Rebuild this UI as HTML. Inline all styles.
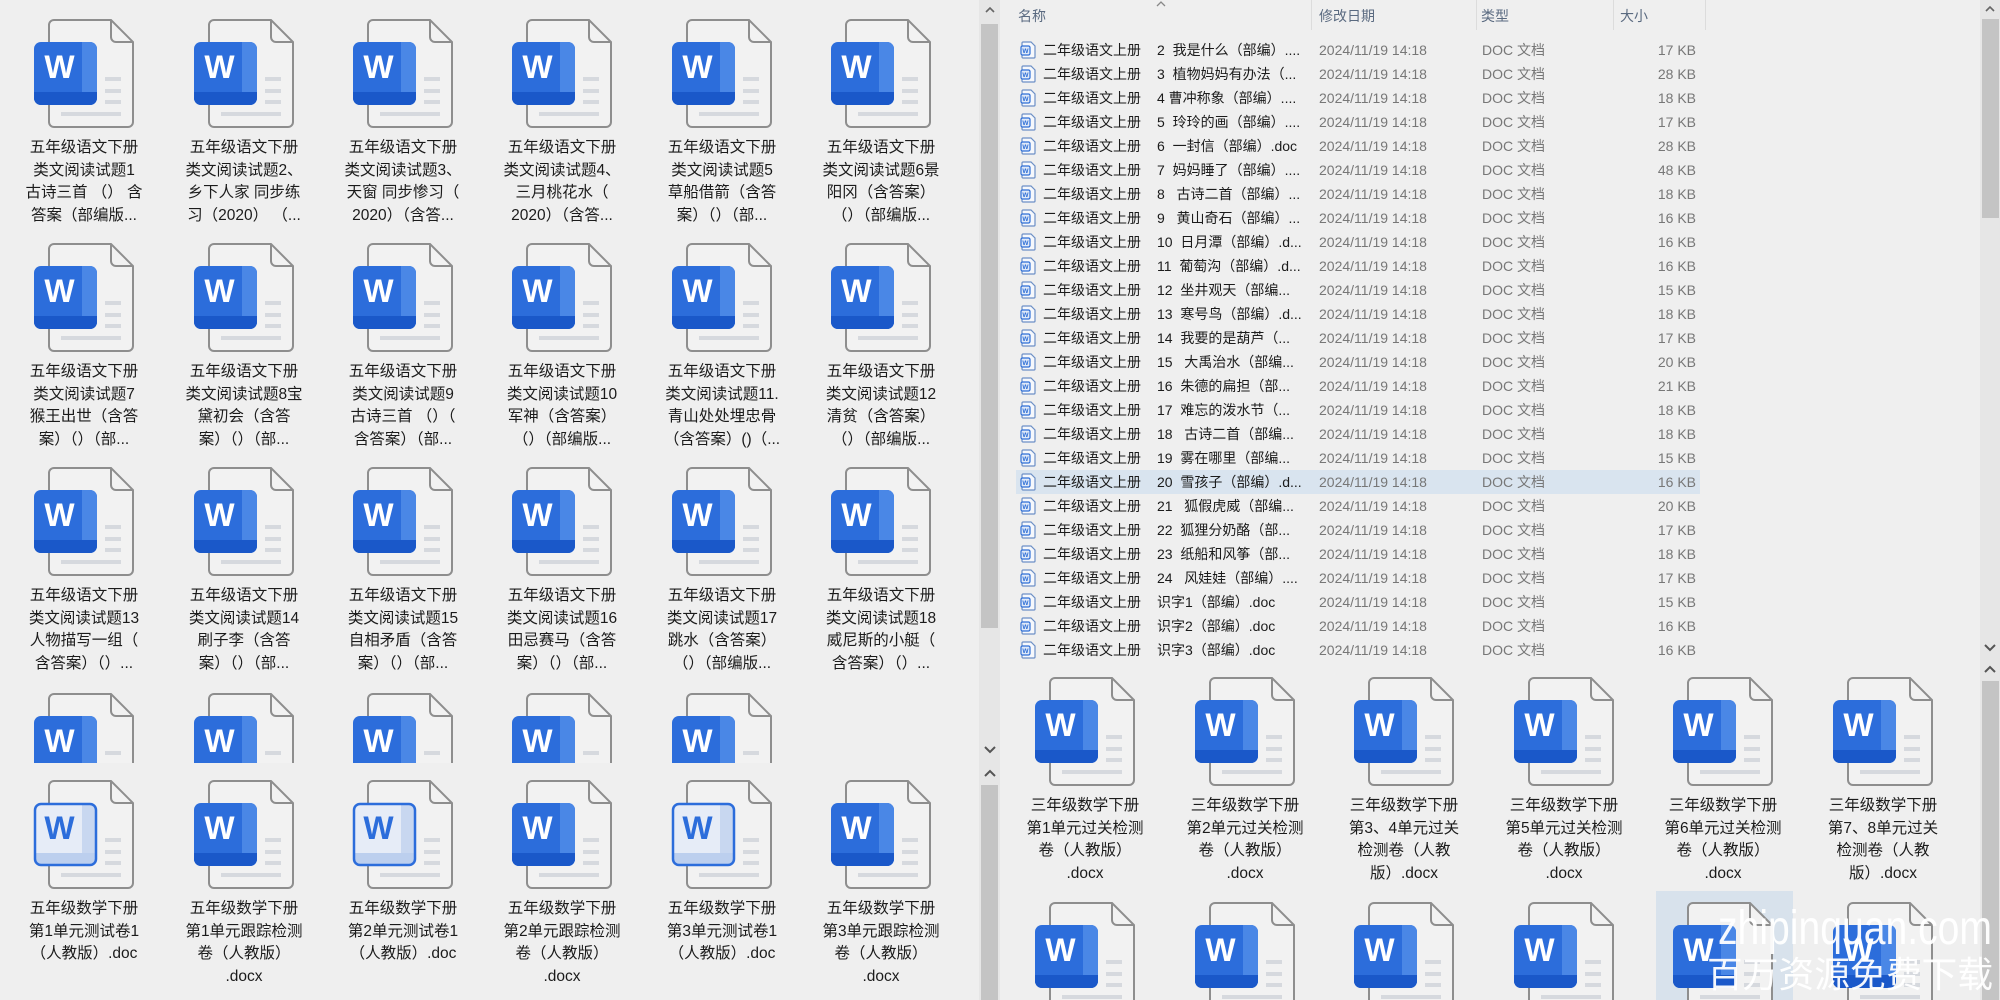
<!DOCTYPE html>
<html style="width:2000px;height:1000px;overflow:hidden"><head><meta charset="utf-8">
<style>
*{margin:0;padding:0;box-sizing:border-box}
html,body{width:2000px;height:1000px;overflow:hidden}
body{background:#efefef;position:relative;font-family:"Liberation Sans","Noto Sans CJK SC",sans-serif;color:#1b1b1b}
.it{position:absolute;width:140px;height:220px}
.it svg{position:absolute;left:19px;top:-1px}
.it .t{position:absolute;left:-10px;top:118px;width:160px;text-align:center;font-size:15.5px;line-height:22.7px;white-space:nowrap}
.clip{height:70px;overflow:hidden}
.hd{position:absolute;top:6px;font-size:14px;color:#5a6a80}
.sep{position:absolute;top:0;width:1px;height:30px;background:#dcdcdc}
.r{position:absolute;left:1016px;width:684px;height:24px;font-size:14px;line-height:24px;white-space:nowrap}
.r svg{position:absolute;left:4px;top:3px}
.r .a{position:absolute;left:27px;color:#1b1b1b}
.r .b{position:absolute;left:141px;color:#1b1b1b}
.r .c{position:absolute;left:303px;color:#777}
.r .d{position:absolute;left:466px;color:#777}
.r .e{position:absolute;right:4px;color:#777}
.hl{background:#d9e4ef}
</style></head><body>
<svg width="0" height="0" style="position:absolute">
<defs>
<clipPath id="cp"><rect x="-14" y="23" width="63" height="63" rx="7"/></clipPath>
<g id="doc">
<path d="M6 1H63L85 23V103a5 5 0 0 1-5 5H6a5 5 0 0 1-5-5V6a5 5 0 0 1 5-5Z" fill="#f2f2f2" stroke="#8e8e8e" stroke-width="2"/>
<path d="M63 1V18a5 5 0 0 0 5 5H85" fill="none" stroke="#8e8e8e" stroke-width="2"/>
<rect x="57" y="58" width="16" height="4" fill="#d6d9de"/><rect x="57" y="70" width="16" height="4" fill="#d6d9de"/><rect x="57" y="81" width="16" height="4" fill="#d6d9de"/><rect x="13" y="93" width="60" height="4" fill="#d6d9de"/>
</g>
<g id="w">
<use href="#doc"/>
<g clip-path="url(#cp)"><rect x="-14" y="23" width="63" height="63" fill="#2c6ddb"/><rect x="34" y="23" width="15" height="63" fill="#4a87e6"/><rect x="-14" y="73" width="63" height="13" fill="#1a58c9"/></g>
<text x="11.5" y="59" font-family="Liberation Sans" font-weight="bold" font-size="32" fill="#fff" text-anchor="middle">W</text>
</g>
<g id="o">
<use href="#doc"/>
<g clip-path="url(#cp)"><rect x="-14" y="23" width="63" height="63" fill="#e6ecf7"/><rect x="34" y="23" width="15" height="63" fill="#c8d7f0"/><rect x="-14" y="73" width="63" height="13" fill="#bccfee"/></g>
<rect x="-13" y="24" width="61" height="61" rx="6" fill="none" stroke="#2c6ddb" stroke-width="2.5"/>
<text x="11.5" y="59" font-family="Liberation Sans" font-weight="bold" font-size="32" fill="#2c6ddb" text-anchor="middle">W</text>
</g>
<g id="s">
<path d="M3 1H11L15 5V16a1 1 0 0 1-1 1H3a1 1 0 0 1-1-1V2a1 1 0 0 1 1-1Z" fill="#f6f8fc" stroke="#6c8fc6" stroke-width="1.2"/>
<rect x="1" y="5" width="9" height="9" rx="1.5" fill="#dfe9f8" stroke="#2f6fd6" stroke-width="1.2"/>
<text x="5.5" y="12" font-family="Liberation Sans" font-weight="bold" font-size="6.5" fill="#2f6fd6" text-anchor="middle">W</text>
</g>
</defs></svg>

<!-- row1 -->
<div class="it" style="left:14px;top:19px"><svg width="102" height="112" viewBox="-15 -1 102 112"><use href="#w"/></svg><div class="t">五年级语文下册<br>类文阅读试题1<br>古诗三首 （） 含<br>答案（部编版...</div></div>
<div class="it" style="left:174px;top:19px"><svg width="102" height="112" viewBox="-15 -1 102 112"><use href="#w"/></svg><div class="t">五年级语文下册<br>类文阅读试题2、<br>乡下人家 同步练<br>习（2020） （...</div></div>
<div class="it" style="left:333px;top:19px"><svg width="102" height="112" viewBox="-15 -1 102 112"><use href="#w"/></svg><div class="t">五年级语文下册<br>类文阅读试题3、<br>天窗 同步惨习（<br>2020）（含答...</div></div>
<div class="it" style="left:492px;top:19px"><svg width="102" height="112" viewBox="-15 -1 102 112"><use href="#w"/></svg><div class="t">五年级语文下册<br>类文阅读试题4、<br>三月桃花水（<br>2020）（含答...</div></div>
<div class="it" style="left:652px;top:19px"><svg width="102" height="112" viewBox="-15 -1 102 112"><use href="#w"/></svg><div class="t">五年级语文下册<br>类文阅读试题5<br>草船借箭（含答<br>案）（）（部...</div></div>
<div class="it" style="left:811px;top:19px"><svg width="102" height="112" viewBox="-15 -1 102 112"><use href="#w"/></svg><div class="t">五年级语文下册<br>类文阅读试题6景<br>阳冈（含答案）<br>（）（部编版...</div></div>
<!-- row2 -->
<div class="it" style="left:14px;top:243px"><svg width="102" height="112" viewBox="-15 -1 102 112"><use href="#w"/></svg><div class="t">五年级语文下册<br>类文阅读试题7<br>猴王出世（含答<br>案）（）（部...</div></div>
<div class="it" style="left:174px;top:243px"><svg width="102" height="112" viewBox="-15 -1 102 112"><use href="#w"/></svg><div class="t">五年级语文下册<br>类文阅读试题8宝<br>黛初会（含答<br>案）（）（部...</div></div>
<div class="it" style="left:333px;top:243px"><svg width="102" height="112" viewBox="-15 -1 102 112"><use href="#w"/></svg><div class="t">五年级语文下册<br>类文阅读试题9<br>古诗三首 （）（<br>含答案）（部...</div></div>
<div class="it" style="left:492px;top:243px"><svg width="102" height="112" viewBox="-15 -1 102 112"><use href="#w"/></svg><div class="t">五年级语文下册<br>类文阅读试题10<br>军神（含答案）<br>（）（部编版...</div></div>
<div class="it" style="left:652px;top:243px"><svg width="102" height="112" viewBox="-15 -1 102 112"><use href="#w"/></svg><div class="t">五年级语文下册<br>类文阅读试题11.<br>青山处处埋忠骨<br>（含答案）()（...</div></div>
<div class="it" style="left:811px;top:243px"><svg width="102" height="112" viewBox="-15 -1 102 112"><use href="#w"/></svg><div class="t">五年级语文下册<br>类文阅读试题12<br>清贫（含答案）<br>（）（部编版...</div></div>
<!-- row3 -->
<div class="it" style="left:14px;top:467px"><svg width="102" height="112" viewBox="-15 -1 102 112"><use href="#w"/></svg><div class="t">五年级语文下册<br>类文阅读试题13<br>人物描写一组（<br>含答案）（）...</div></div>
<div class="it" style="left:174px;top:467px"><svg width="102" height="112" viewBox="-15 -1 102 112"><use href="#w"/></svg><div class="t">五年级语文下册<br>类文阅读试题14<br>刷子李（含答<br>案）（）（部...</div></div>
<div class="it" style="left:333px;top:467px"><svg width="102" height="112" viewBox="-15 -1 102 112"><use href="#w"/></svg><div class="t">五年级语文下册<br>类文阅读试题15<br>自相矛盾（含答<br>案）（）（部...</div></div>
<div class="it" style="left:492px;top:467px"><svg width="102" height="112" viewBox="-15 -1 102 112"><use href="#w"/></svg><div class="t">五年级语文下册<br>类文阅读试题16<br>田忌赛马（含答<br>案）（）（部...</div></div>
<div class="it" style="left:652px;top:467px"><svg width="102" height="112" viewBox="-15 -1 102 112"><use href="#w"/></svg><div class="t">五年级语文下册<br>类文阅读试题17<br>跳水（含答案）<br>（）（部编版...</div></div>
<div class="it" style="left:811px;top:467px"><svg width="102" height="112" viewBox="-15 -1 102 112"><use href="#w"/></svg><div class="t">五年级语文下册<br>类文阅读试题18<br>威尼斯的小艇（<br>含答案）（）...</div></div>
<!-- row4 partial -->
<div class="it clip" style="left:14px;top:693px"><svg width="102" height="112" viewBox="-15 -1 102 112"><use href="#w"/></svg></div>
<div class="it clip" style="left:174px;top:693px"><svg width="102" height="112" viewBox="-15 -1 102 112"><use href="#w"/></svg></div>
<div class="it clip" style="left:333px;top:693px"><svg width="102" height="112" viewBox="-15 -1 102 112"><use href="#w"/></svg></div>
<div class="it clip" style="left:492px;top:693px"><svg width="102" height="112" viewBox="-15 -1 102 112"><use href="#w"/></svg></div>
<div class="it clip" style="left:652px;top:693px"><svg width="102" height="112" viewBox="-15 -1 102 112"><use href="#w"/></svg></div>
<!-- row5 -->
<div class="it" style="left:14px;top:780px"><svg width="102" height="112" viewBox="-15 -1 102 112"><use href="#o"/></svg><div class="t">五年级数学下册<br>第1单元测试卷1<br>（人教版）.doc</div></div>
<div class="it" style="left:174px;top:780px"><svg width="102" height="112" viewBox="-15 -1 102 112"><use href="#w"/></svg><div class="t">五年级数学下册<br>第1单元跟踪检测<br>卷（人教版）<br>.docx</div></div>
<div class="it" style="left:333px;top:780px"><svg width="102" height="112" viewBox="-15 -1 102 112"><use href="#o"/></svg><div class="t">五年级数学下册<br>第2单元测试卷1<br>（人教版）.doc</div></div>
<div class="it" style="left:492px;top:780px"><svg width="102" height="112" viewBox="-15 -1 102 112"><use href="#w"/></svg><div class="t">五年级数学下册<br>第2单元跟踪检测<br>卷（人教版）<br>.docx</div></div>
<div class="it" style="left:652px;top:780px"><svg width="102" height="112" viewBox="-15 -1 102 112"><use href="#o"/></svg><div class="t">五年级数学下册<br>第3单元测试卷1<br>（人教版）.doc</div></div>
<div class="it" style="left:811px;top:780px"><svg width="102" height="112" viewBox="-15 -1 102 112"><use href="#w"/></svg><div class="t">五年级数学下册<br>第3单元跟踪检测<br>卷（人教版）<br>.docx</div></div>

<!-- left scrollbar -->
<div style="position:absolute;left:979px;top:0;width:21px;height:1000px;background:#e6e6e6"></div>
<div style="position:absolute;left:981px;top:24px;width:17px;height:604px;background:#c4c4c4"></div>
<svg style="position:absolute;left:983px;top:4px" width="14" height="10"><path d="M3 8L7 4L11 8" fill="none" stroke="#666" stroke-width="1.6"/></svg>
<svg style="position:absolute;left:983px;top:745px" width="14" height="10"><path d="M2 2L7 7L12 2" fill="none" stroke="#555" stroke-width="2"/></svg>
<svg style="position:absolute;left:983px;top:768px" width="14" height="10"><path d="M2 8L7 3L12 8" fill="none" stroke="#555" stroke-width="2"/></svg>
<div style="position:absolute;left:981px;top:785px;width:17px;height:215px;background:#c4c4c4"></div>

<!-- header -->
<div class="hd" style="left:1018px">名称</div>
<svg style="position:absolute;left:1155px;top:0" width="12" height="7"><path d="M2 6L6 2L10 6" fill="none" stroke="#888" stroke-width="1.3"/></svg>
<div class="sep" style="left:1311px"></div>
<div class="hd" style="left:1319px">修改日期</div>
<div class="sep" style="left:1476px"></div>
<div class="hd" style="left:1481px">类型</div>
<div class="sep" style="left:1613px"></div>
<div class="hd" style="left:1620px">大小</div>
<div class="sep" style="left:1705px"></div>

<!-- list rows -->
<div class="r" style="top:38px"><svg width="17" height="18"><use href="#s"/></svg><span class="a">二年级语文上册</span><span class="b">2&nbsp; 我是什么（部编）....</span><span class="c">2024/11/19 14:18</span><span class="d">DOC 文档</span><span class="e">17 KB</span></div>
<div class="r" style="top:62px"><svg width="17" height="18"><use href="#s"/></svg><span class="a">二年级语文上册</span><span class="b">3&nbsp; 植物妈妈有办法（...</span><span class="c">2024/11/19 14:18</span><span class="d">DOC 文档</span><span class="e">28 KB</span></div>
<div class="r" style="top:86px"><svg width="17" height="18"><use href="#s"/></svg><span class="a">二年级语文上册</span><span class="b">4 曹冲称象（部编）....</span><span class="c">2024/11/19 14:18</span><span class="d">DOC 文档</span><span class="e">18 KB</span></div>
<div class="r" style="top:110px"><svg width="17" height="18"><use href="#s"/></svg><span class="a">二年级语文上册</span><span class="b">5&nbsp; 玲玲的画（部编）....</span><span class="c">2024/11/19 14:18</span><span class="d">DOC 文档</span><span class="e">17 KB</span></div>
<div class="r" style="top:134px"><svg width="17" height="18"><use href="#s"/></svg><span class="a">二年级语文上册</span><span class="b">6&nbsp; 一封信（部编）.doc</span><span class="c">2024/11/19 14:18</span><span class="d">DOC 文档</span><span class="e">28 KB</span></div>
<div class="r" style="top:158px"><svg width="17" height="18"><use href="#s"/></svg><span class="a">二年级语文上册</span><span class="b">7&nbsp; 妈妈睡了（部编）....</span><span class="c">2024/11/19 14:18</span><span class="d">DOC 文档</span><span class="e">48 KB</span></div>
<div class="r" style="top:182px"><svg width="17" height="18"><use href="#s"/></svg><span class="a">二年级语文上册</span><span class="b">8&nbsp;&nbsp; 古诗二首（部编）...</span><span class="c">2024/11/19 14:18</span><span class="d">DOC 文档</span><span class="e">18 KB</span></div>
<div class="r" style="top:206px"><svg width="17" height="18"><use href="#s"/></svg><span class="a">二年级语文上册</span><span class="b">9&nbsp;&nbsp; 黄山奇石（部编）...</span><span class="c">2024/11/19 14:18</span><span class="d">DOC 文档</span><span class="e">16 KB</span></div>
<div class="r" style="top:230px"><svg width="17" height="18"><use href="#s"/></svg><span class="a">二年级语文上册</span><span class="b">10&nbsp; 日月潭（部编）.d...</span><span class="c">2024/11/19 14:18</span><span class="d">DOC 文档</span><span class="e">16 KB</span></div>
<div class="r" style="top:254px"><svg width="17" height="18"><use href="#s"/></svg><span class="a">二年级语文上册</span><span class="b">11&nbsp; 葡萄沟（部编）.d...</span><span class="c">2024/11/19 14:18</span><span class="d">DOC 文档</span><span class="e">16 KB</span></div>
<div class="r" style="top:278px"><svg width="17" height="18"><use href="#s"/></svg><span class="a">二年级语文上册</span><span class="b">12&nbsp; 坐井观天（部编...</span><span class="c">2024/11/19 14:18</span><span class="d">DOC 文档</span><span class="e">15 KB</span></div>
<div class="r" style="top:302px"><svg width="17" height="18"><use href="#s"/></svg><span class="a">二年级语文上册</span><span class="b">13&nbsp; 寒号鸟（部编）.d...</span><span class="c">2024/11/19 14:18</span><span class="d">DOC 文档</span><span class="e">18 KB</span></div>
<div class="r" style="top:326px"><svg width="17" height="18"><use href="#s"/></svg><span class="a">二年级语文上册</span><span class="b">14&nbsp; 我要的是葫芦（...</span><span class="c">2024/11/19 14:18</span><span class="d">DOC 文档</span><span class="e">17 KB</span></div>
<div class="r" style="top:350px"><svg width="17" height="18"><use href="#s"/></svg><span class="a">二年级语文上册</span><span class="b">15&nbsp;&nbsp; 大禹治水（部编...</span><span class="c">2024/11/19 14:18</span><span class="d">DOC 文档</span><span class="e">20 KB</span></div>
<div class="r" style="top:374px"><svg width="17" height="18"><use href="#s"/></svg><span class="a">二年级语文上册</span><span class="b">16&nbsp; 朱德的扁担（部...</span><span class="c">2024/11/19 14:18</span><span class="d">DOC 文档</span><span class="e">21 KB</span></div>
<div class="r" style="top:398px"><svg width="17" height="18"><use href="#s"/></svg><span class="a">二年级语文上册</span><span class="b">17&nbsp; 难忘的泼水节（...</span><span class="c">2024/11/19 14:18</span><span class="d">DOC 文档</span><span class="e">18 KB</span></div>
<div class="r" style="top:422px"><svg width="17" height="18"><use href="#s"/></svg><span class="a">二年级语文上册</span><span class="b">18&nbsp;&nbsp; 古诗二首（部编...</span><span class="c">2024/11/19 14:18</span><span class="d">DOC 文档</span><span class="e">18 KB</span></div>
<div class="r" style="top:446px"><svg width="17" height="18"><use href="#s"/></svg><span class="a">二年级语文上册</span><span class="b">19&nbsp; 雾在哪里（部编...</span><span class="c">2024/11/19 14:18</span><span class="d">DOC 文档</span><span class="e">15 KB</span></div>
<div class="r hl" style="top:470px"><svg width="17" height="18"><use href="#s"/></svg><span class="a">二年级语文上册</span><span class="b">20&nbsp; 雪孩子（部编）.d...</span><span class="c">2024/11/19 14:18</span><span class="d">DOC 文档</span><span class="e">16 KB</span></div>
<div class="r" style="top:494px"><svg width="17" height="18"><use href="#s"/></svg><span class="a">二年级语文上册</span><span class="b">21&nbsp;&nbsp; 狐假虎威（部编...</span><span class="c">2024/11/19 14:18</span><span class="d">DOC 文档</span><span class="e">20 KB</span></div>
<div class="r" style="top:518px"><svg width="17" height="18"><use href="#s"/></svg><span class="a">二年级语文上册</span><span class="b">22&nbsp; 狐狸分奶酪（部...</span><span class="c">2024/11/19 14:18</span><span class="d">DOC 文档</span><span class="e">17 KB</span></div>
<div class="r" style="top:542px"><svg width="17" height="18"><use href="#s"/></svg><span class="a">二年级语文上册</span><span class="b">23&nbsp; 纸船和风筝（部...</span><span class="c">2024/11/19 14:18</span><span class="d">DOC 文档</span><span class="e">18 KB</span></div>
<div class="r" style="top:566px"><svg width="17" height="18"><use href="#s"/></svg><span class="a">二年级语文上册</span><span class="b">24&nbsp;&nbsp; 风娃娃（部编）....</span><span class="c">2024/11/19 14:18</span><span class="d">DOC 文档</span><span class="e">17 KB</span></div>
<div class="r" style="top:590px"><svg width="17" height="18"><use href="#s"/></svg><span class="a">二年级语文上册</span><span class="b">识字1（部编）.doc</span><span class="c">2024/11/19 14:18</span><span class="d">DOC 文档</span><span class="e">15 KB</span></div>
<div class="r" style="top:614px"><svg width="17" height="18"><use href="#s"/></svg><span class="a">二年级语文上册</span><span class="b">识字2（部编）.doc</span><span class="c">2024/11/19 14:18</span><span class="d">DOC 文档</span><span class="e">16 KB</span></div>
<div class="r" style="top:638px"><svg width="17" height="18"><use href="#s"/></svg><span class="a">二年级语文上册</span><span class="b">识字3（部编）.doc</span><span class="c">2024/11/19 14:18</span><span class="d">DOC 文档</span><span class="e">16 KB</span></div>

<!-- right grid -->
<div style="position:absolute;left:1656px;top:891px;width:137px;height:109px;background:#d8e2ec"></div>
<div class="it" style="left:1015px;top:677px"><svg width="102" height="112" viewBox="-15 -1 102 112"><use href="#w"/></svg><div class="t">三年级数学下册<br>第1单元过关检测<br>卷（人教版）<br>.docx</div></div>
<div class="it" style="left:1175px;top:677px"><svg width="102" height="112" viewBox="-15 -1 102 112"><use href="#w"/></svg><div class="t">三年级数学下册<br>第2单元过关检测<br>卷（人教版）<br>.docx</div></div>
<div class="it" style="left:1334px;top:677px"><svg width="102" height="112" viewBox="-15 -1 102 112"><use href="#w"/></svg><div class="t">三年级数学下册<br>第3、4单元过关<br>检测卷（人教<br>版）.docx</div></div>
<div class="it" style="left:1494px;top:677px"><svg width="102" height="112" viewBox="-15 -1 102 112"><use href="#w"/></svg><div class="t">三年级数学下册<br>第5单元过关检测<br>卷（人教版）<br>.docx</div></div>
<div class="it" style="left:1653px;top:677px"><svg width="102" height="112" viewBox="-15 -1 102 112"><use href="#w"/></svg><div class="t">三年级数学下册<br>第6单元过关检测<br>卷（人教版）<br>.docx</div></div>
<div class="it" style="left:1813px;top:677px"><svg width="102" height="112" viewBox="-15 -1 102 112"><use href="#w"/></svg><div class="t">三年级数学下册<br>第7、8单元过关<br>检测卷（人教<br>版）.docx</div></div>
<div class="it" style="left:1015px;top:902px;height:98px;overflow:hidden"><svg width="102" height="112" viewBox="-15 -1 102 112"><use href="#w"/></svg></div>
<div class="it" style="left:1175px;top:902px;height:98px;overflow:hidden"><svg width="102" height="112" viewBox="-15 -1 102 112"><use href="#w"/></svg></div>
<div class="it" style="left:1334px;top:902px;height:98px;overflow:hidden"><svg width="102" height="112" viewBox="-15 -1 102 112"><use href="#w"/></svg></div>
<div class="it" style="left:1494px;top:902px;height:98px;overflow:hidden"><svg width="102" height="112" viewBox="-15 -1 102 112"><use href="#w"/></svg></div>
<div class="it" style="left:1653px;top:902px;height:98px;overflow:hidden"><svg width="102" height="112" viewBox="-15 -1 102 112"><use href="#w"/></svg></div>
<div class="it" style="left:1813px;top:902px;height:98px;overflow:hidden"><svg width="102" height="112" viewBox="-15 -1 102 112"><use href="#w"/></svg></div>

<!-- right scrollbar -->
<div style="position:absolute;left:1980px;top:0;width:20px;height:1000px;background:#e6e6e6"></div>
<svg style="position:absolute;left:1983px;top:3px" width="14" height="10"><path d="M3 8L7 4L11 8" fill="none" stroke="#666" stroke-width="1.6"/></svg>
<div style="position:absolute;left:1982px;top:19px;width:17px;height:199px;background:#c4c4c4"></div>
<svg style="position:absolute;left:1983px;top:643px" width="14" height="10"><path d="M2 2L7 7L12 2" fill="none" stroke="#555" stroke-width="2"/></svg>
<svg style="position:absolute;left:1983px;top:664px" width="14" height="10"><path d="M2 8L7 3L12 8" fill="none" stroke="#555" stroke-width="2"/></svg>
<div style="position:absolute;left:1982px;top:681px;width:17px;height:319px;background:#c4c4c4"></div>

<!-- watermark -->
<svg style="position:absolute;left:0;top:0" width="2000" height="1000">
<text x="1718" y="944" font-family="Liberation Sans" font-size="48" fill="#ffffff" fill-opacity="0.95" textLength="274" lengthAdjust="spacingAndGlyphs">zhipinquan.com</text>
<text x="1707" y="987" font-family="Noto Sans CJK SC, sans-serif" font-size="36" fill="#ffffff" fill-opacity="0.95" textLength="286" lengthAdjust="spacingAndGlyphs">百万资源免费下载</text>
</svg>
</body></html>
